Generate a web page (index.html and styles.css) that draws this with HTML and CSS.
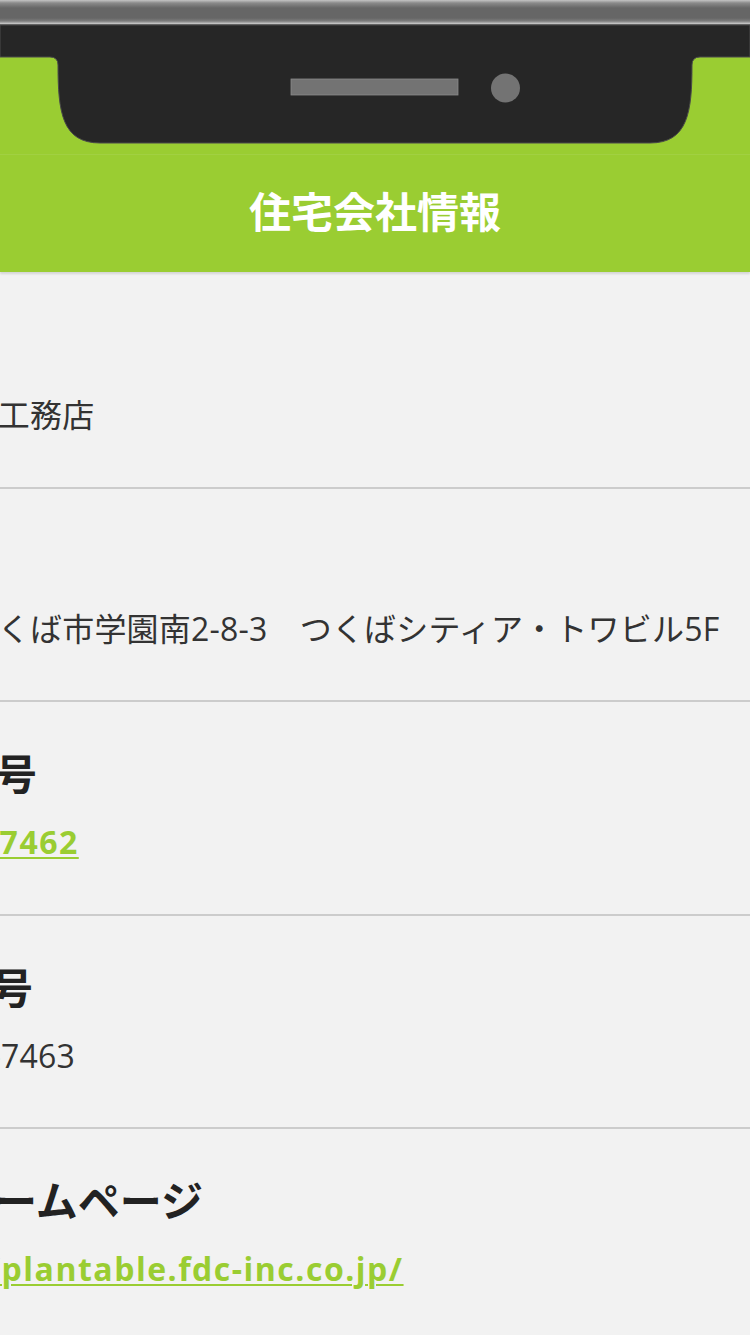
FILE: index.html
```html
<!DOCTYPE html>
<html lang="ja">
<head>
  <meta charset="UTF-8">
  <meta name="viewport" content="width=device-width, initial-scale=1.0">
  <title>住宅会社情報</title>
  <link rel="stylesheet" href="styles.css">
</head>
<body>
  <!-- Phone frame (lies over the header) -->
  <div class="frame">
    <div class="frame-top"></div>
    <svg class="notch" width="750" height="150" viewBox="0 0 750 150">
      <path d="M0,25 H750 V57 H700 Q692,57 692,65 C692,112 688,143 650,143 H100 C62,143 58,112 58,65 Q58,57 50,57 H0 Z" fill="#262626" stroke="#4a4a4a" stroke-width="1"/>
      <rect x="291" y="79" width="167" height="16" fill="#737373" stroke="#8a8a8a" stroke-width="0.8"/>
      <circle cx="505.5" cy="88" r="14.5" fill="#737373"/>
    </svg>
  </div>

  <!-- Header -->
  <header class="page-header">
    <h1>住宅会社情報</h1>
  </header>

  <!-- Company info -->
  <main class="info">
    <section class="row">
      <h2 class="label">会社名</h2>
      <p class="value">筑波住建工務店</p>
    </section>
    <section class="row">
      <h2 class="label">住所</h2>
      <p class="value">茨城県つくば市学園南2-8-3　つくばシティア・トワビル5F</p>
    </section>
    <section class="row">
      <h2 class="label">電話番号</h2>
      <p class="value"><a href="tel:0298557462">029-8557462</a></p>
    </section>
    <section class="row">
      <h2 class="label">FAX番号</h2>
      <p class="value">029-875-7463</p>
    </section>
    <section class="row">
      <h2 class="label">会社ホームページ</h2>
      <p class="value"><a href="https://plantable.fdc-inc.co.jp/">https://plantable.fdc-inc.co.jp/</a></p>
    </section>
  </main>
</body>
</html>
```

FILE: styles.css
```css
body {
  margin: 0;
  background-color: #f2f2f2;
  color: #333;
  font-family: "Open Sans", "Noto Sans CJK JP", sans-serif;
  overflow: hidden;
}

.frame {
  position: absolute;
  top: 0;
  left: 0;
  width: 750px;
  height: 150px;
  z-index: 2;
}
.frame-top {
  height: 25px;
  background: linear-gradient(#c4c4c4 0, #8a8a8a 3px, #666 8px, #666 18px, #7c7c7c 21px, #cfcfcf 24px, #262626 25px);
}
.notch {
  position: absolute;
  top: 0;
  left: 0;
}

.page-header {
  background-color: #9acd32;
  padding-top: 154px;
  box-shadow: 0 2px 2px rgba(0, 0, 0, 0.12);
  position: relative;
  z-index: 1;
}
.page-header h1 {
  margin: 0;
  border-top: 1px solid rgba(255, 255, 255, 0.08);
  height: 117px;
  line-height: 110px;
  text-align: center;
  color: #fff;
  font-size: 42px;
  font-weight: bold;
  font-family: "Noto Sans CJK JP", sans-serif;
}

.info {
  margin-left: -131px;
  width: 1000px;
}
.row {
  padding: 42px 0 47.5px;
  border-bottom: 2px solid #cccccc;
}
.row:first-child {
  padding-top: 45px;
}
.label {
  margin: 0;
  font-size: 42px;
  line-height: 60px;
  font-weight: bold;
  color: #222;
}
.value {
  margin: 14px 0 0;
  font-size: 32px;
  line-height: 48px;
  white-space: nowrap;
  color: #333;
  letter-spacing: 0.2px;
}
.value a {
  color: #9acd32;
  font-weight: bold;
  letter-spacing: 1.5px;
  text-decoration: underline;
  text-decoration-thickness: 2px;
  text-underline-offset: 3px;
}
```
